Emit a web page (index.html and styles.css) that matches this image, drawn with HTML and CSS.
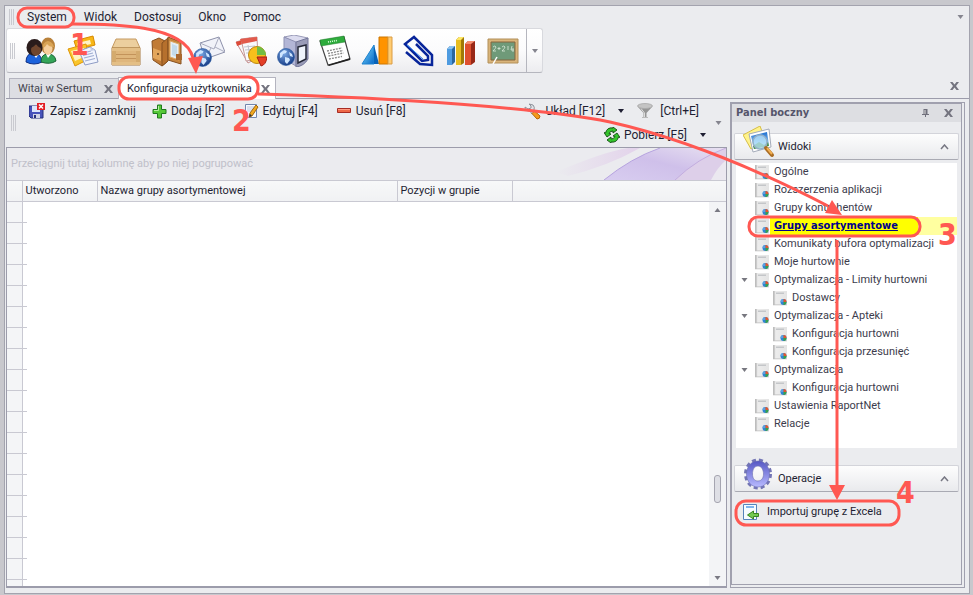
FILE: index.html
```html
<!DOCTYPE html>
<html lang="pl">
<head>
<meta charset="utf-8">
<title>Sertum</title>
<link rel="stylesheet" href="styles.css">
</head>
<body>
<svg class="defs" width="0" height="0" aria-hidden="true">
  <defs>
    <linearGradient id="steel" x1="0" y1="0" x2="1" y2="0"><stop offset="0" stop-color="#c3c3c3"/><stop offset=".2" stop-color="#ececec"/><stop offset="1" stop-color="#e4e4e4"/></linearGradient>
    <linearGradient id="mount" x1="0" y1="0" x2="1" y2="1"><stop offset="0" stop-color="#7fe0ff"/><stop offset="1" stop-color="#0868c8"/></linearGradient>
    <linearGradient id="gear" x1="0" y1="0" x2="0" y2="1"><stop offset="0" stop-color="#5658c4"/><stop offset="1" stop-color="#b8baff"/></linearGradient>
    <linearGradient id="sky" x1="0" y1="0" x2="0" y2="1"><stop offset="0" stop-color="#1d6fd0"/><stop offset="1" stop-color="#c5edff"/></linearGradient>
    <radialGradient id="ball" cx=".4" cy=".3" r=".8"><stop offset="0" stop-color="#7aa8e4"/><stop offset="1" stop-color="#0a2f7c"/></radialGradient>
    <symbol id="doc" viewBox="0 0 16 16">
      <path d="M1 1h14v14H1z" fill="url(#steel)"/><path d="M1 1h1.500v14H1zM1 14.500h14v.8H1z" fill="#bdbdbd"/>
      <path d="M4 2.500h8v1.500H4z" fill="#c4c6c9"/>
      <circle cx="11.500" cy="12" r="3" fill="#2f83d6"/><path d="M8.500 12a3 3 0 0 1 3-3v3z" fill="#5aa0e0"/><path d="M11.500 12V9a3 3 0 0 1 3 3z" fill="#e2582c"/><path d="M11.500 12h3a3 3 0 0 1-3 3z" fill="#3aa04a"/>
    </symbol>
    <symbol id="globe" viewBox="0 0 18 18">
      <circle cx="9" cy="9" r="8.500" fill="url(#ball)" stroke="#24569e" stroke-width=".6"/>
      <path d="M3 5l4-3 3 1-1 2-3 1-1 3-2 1zM8 9l4 1 1 2-3 4-2-2zM12 4l3 2 1 3-3-1z" fill="#cfe6ff"/>
    </symbol>
    <symbol id="close" viewBox="0 0 9 8"><path d="M0 0h2.500L4.500 2.500 6.500 0H9L6 4l3 4H6.500L4.500 5.500 2.500 8H0l3-4z" fill="#74747f"/></symbol>
    <symbol id="down" viewBox="0 0 6 4"><path d="M0 0h6L3 4z" fill="currentColor"/></symbol>
  </defs>
</svg>

<div class="window">
  <nav class="menubar" aria-label="Menu">
    <span class="grip"></span>
    <button>System</button><button>Widok</button><button>Dostosuj</button><button>Okno</button><button>Pomoc</button>
    <svg class="menu-more" width="7" height="4"><use href="#down"/></svg>
  </nav>

  <div class="toolbar">
    <span class="grip"></span>
    <button aria-label="Kontrahenci"><svg width="32" height="32" viewBox="0 0 32 32">
      <path d="M1 27q0-9 8-9 7 0 8 9-8 4-16 0z" fill="#1d63dc" stroke="#0d2f86"/><path d="M8 19l3 4 3-4z" fill="#fff"/>
      <path d="M16 27q0-8 7-8t8 7q-6 4-15 1z" fill="#34a558" stroke="#196233"/><path d="M21 19l2 4 3-4z" fill="#fff"/>
      <ellipse cx="23" cy="11" rx="7" ry="8.500" fill="#b9813a"/><ellipse cx="23" cy="13.500" rx="4.500" ry="6" fill="#f6cf9d"/><path d="M17 13q1-6 6-7 5 1 6 6-5 0-7-3-2 4-5 4z" fill="#d9a456"/>
      <ellipse cx="9.500" cy="12.500" rx="8" ry="8.500" fill="#2a1c1c"/><ellipse cx="11" cy="15" rx="5" ry="5.500" fill="#70462e"/><path d="M5 13q5-1 6-5 1 4 5 5l-1-6-5-2-5 3z" fill="#2a1c1c"/>
    </svg></button>
    <button aria-label="Dokumenty"><svg width="32" height="32" viewBox="0 0 32 32">
      <path d="M7 6L26 1l2 9-18 5z" fill="#f7b717" stroke="#d98a00"/><path d="M10 8l13-3 1 4-13 3z" fill="#fff3c7"/>
      <path d="M1 14L19 9l3 15-14 7z" fill="#f9c52c" stroke="#df9606"/><path d="M4 16l13-3 2 8-11 5z" fill="#fff2c0"/>
      <path d="M12 16l11-4 5 3 3 12-13 3z" fill="#f1f4fd" stroke="#8e9cc5"/><path d="M23 12l1 4 4-1z" fill="#c2cce8"/><path d="M16 18l8-2M16 20.500l10-2.500M17 23l10-2.500M18 26l10-2.500" stroke="#a0aed2" stroke-width="1.200"/>
    </svg></button>
    <button aria-label="Magazyn"><svg width="32" height="32" viewBox="0 0 32 32">
      <path d="M7 4h20l4 9H3z" fill="#eccf9e" stroke="#c59a61"/><path d="M3 13h28v17H3z" fill="#c39257" stroke="#a67840"/>
      <path d="M7 16h20v11H7z" fill="#dfb67c"/><path d="M7 19.500h20M7 23.500h20" stroke="#c3935a"/><path d="M3 13h28v3H3zM3 27h28v3H3z" fill="#e4bf86"/><path d="M3 16h4v11H3zM27 16h4v11h-4z" fill="#d4aa6d"/>
    </svg></button>
    <button aria-label="Katalog"><svg width="32" height="32" viewBox="0 0 32 32">
      <path d="M1 6l7-3 8 4v20l-5 4-9-6z" fill="#c17b36" stroke="#855020"/><path d="M2 13l8 3v10l-8-3z" fill="#e3a65c"/>
      <path d="M11 8l6-5v23l-6 5z" fill="#b6702d" stroke="#855020"/><path d="M17 2l13 5v22l-13-4z" fill="#c7843c" stroke="#855020"/>
      <path d="M19 6l9 3v16l-9-3z" fill="#e5eef4" stroke="#e0aa64"/><path d="M21 9l5 2v11l-5-2z" fill="#c4dbea"/><path d="M25 19h6v6h-6z" fill="#a9682f"/><circle cx="7" cy="19" r="1" fill="#65401f"/>
    </svg></button>
    <button aria-label="Poczta"><svg width="32" height="32" viewBox="0 0 32 32">
      <path d="M7 8L26 2l6 15-20 7z" fill="#f1f2f9" stroke="#8d91aa"/><path d="M7 8l14 6 5-12M12 24l6-11M32 17l-10-5" fill="none" stroke="#a9acbf"/>
      <use href="#globe" x="0" y="13" width="19" height="19"/>
    </svg></button>
    <button aria-label="Raporty"><svg width="32" height="32" viewBox="0 0 32 32">
      <path d="M1 7l14-4 7 20-9 5z" fill="#f8f8fb" stroke="#c58b8b"/><path d="M1 7l14-4 1 3L2 11z" fill="#dd4a38"/>
      <path d="M6 4l16-2 1 22-12 2z" fill="#f9f9fc" stroke="#c49999"/><path d="M5 4l17-2v4L7 9z" fill="#e25a4c"/><path d="M9 12l11-1M10 15l10-1M11 18h6M13 10l2 12" stroke="#c2c4d0"/>
      <circle cx="22" cy="20" r="8.500" fill="#f8bf1c" stroke="#bc8510"/><path d="M22 20v-8.500a9 9 0 0 1 9 8.500z" fill="#72bd42"/><path d="M22 22l10 0q-1 8-6 9z" fill="#e33f27" stroke="#a32014"/>
    </svg></button>
    <button aria-label="Serwer"><svg width="32" height="32" viewBox="0 0 32 32">
      <path d="M7 2l10-2 14 3-3 4-9 1z" fill="#dcdcef" stroke="#9a9bb8"/><path d="M7 2l12 5v24L7 24z" fill="#b3b6d6" stroke="#8f92b3"/><path d="M19 7l12-4v21q-4 7-12 8z" fill="#9a9cb8" stroke="#74779a"/><path d="M21 12l8-2v14l-8 4z" fill="#eef3fb" stroke="#252838" stroke-width="1.500"/>
      <use href="#globe" x="0" y="13" width="18" height="18"/>
    </svg></button>
    <button aria-label="Kalendarz"><svg width="32" height="32" viewBox="0 0 32 32">
      <path d="M1 6l24-4 6 22-22 6z" fill="#fff" stroke="#444" stroke-width="1.200"/><path d="M1 5l24-4 1 6L2 11z" fill="#2eac3c" stroke="#1d7a28" stroke-width=".5"/><path d="M9 30l22-7v2l-21 6z" fill="#222"/>
      <path d="M8 16l15-3M9 18.500l15-3M9.500 21l15-3M10 24l13-2.500" stroke="#888" stroke-width="1.300" stroke-dasharray="2 1"/><path d="M9 7l9-1.500" stroke="#d9ffd9" stroke-width="1.500" stroke-dasharray="1 1"/>
    </svg></button>
    <button aria-label="Analizy"><svg width="32" height="32" viewBox="0 0 32 32">
      <path d="M1 29L13 10v19z" fill="url(#mount)" stroke="#1e83cf"/><path d="M13 10l5 19h-5z" fill="#0863b9"/>
      <path d="M18 2h9v27h-9z" fill="#ff9300" stroke="#cc7600"/><path d="M27 2h4v27h-4z" fill="#ffcc72" stroke="#db9c42"/>
    </svg></button>
    <button aria-label="Załączniki"><svg width="32" height="32" viewBox="0 0 32 32">
      <path d="M3 17L17 29l12 1 0-10L11 2 2 9l17 17 6-1 0-4L13 9" fill="none" stroke="#08259a" stroke-width="2.500"/><path d="M4 10l16 14" stroke="#2f83f0" stroke-width="1"/>
    </svg></button>
    <button aria-label="Statystyki"><svg width="32" height="32" viewBox="0 0 32 32">
      <path d="M2 14l3-3h5v16l-3 3H2z" fill="#2a669f"/><path d="M2 14h5v16H2z" fill="#4e9be0"/><path d="M2 14l3-3h5l-3 3z" fill="#8ac3f2"/>
      <path d="M11 5l3-3h5v26l-3 2h-5z" fill="#a07a08"/><path d="M11 5h5v25h-5z" fill="#e7bd20"/><path d="M11 5l3-3h5l-3 3z" fill="#ffe865"/>
      <path d="M20 9l3-3h7v21l-4 3h-6z" fill="#982817"/><path d="M20 9h6v21h-6z" fill="#df502f"/><path d="M20 9l3-3h7l-4 3z" fill="#f58d70"/>
    </svg></button>
    <button aria-label="Tablica"><svg width="32" height="32" viewBox="0 0 32 32">
      <path d="M1 4h30v24H1z" fill="#d9b47a" stroke="#b28f58"/><path d="M4 7h24v18H4z" fill="#6f9a79" stroke="#86653d"/>
      <path d="M6 12q2-2 3 0 0 1-3 4h3M12 12v3m-1.500-1.500h3M15 12q2-2 3 0 0 1-3 4h3M20 12h2m-2 2h2M25 11l-1 4h3m-1-2v4" fill="none" stroke="#dcebdc" stroke-width=".8"/><path d="M10 22l-4 7" stroke="#fff" stroke-width="1.500"/>
    </svg></button>
    <button class="overflow" aria-label="Więcej"><svg width="6" height="4"><use href="#down"/></svg></button>
  </div>

  <div class="tabs">
    <div class="tab"><a href="#start">Witaj w Sertum</a><button aria-label="Zamknij kartę"><svg width="9" height="8"><use href="#close"/></svg></button></div>
    <div class="tab active"><a href="#config">Konfiguracja użytkownika</a><button aria-label="Zamknij kartę"><svg width="9" height="8"><use href="#close"/></svg></button></div>
    <button class="close-all" aria-label="Zamknij"><svg width="9" height="8"><use href="#close"/></svg></button>
  </div>

  <div class="workspace">
    <main class="main">
      <div class="commands">
        <span class="grip"></span>
        <div class="command-list">
          <button class="save"><svg width="16" height="16" viewBox="0 0 16 16"><path d="M0 3h14v12H2l-2-2z" fill="#4753ba" stroke="#252f7a"/><path d="M3 3h8v6H3z" fill="#dce5fa"/><path d="M4 11h7v4H4z" fill="#d2d5e5"/><path d="M5 12h2v3H5z" fill="#252f7a"/><path d="M8 0h8v7H8z" fill="#e31e24"/><path d="M10 1.500l4 4m0-4l-4 4" stroke="#fff" stroke-width="1.500"/></svg>Zapisz i zamknij</button>
          <button class="add"><svg width="15" height="15" viewBox="0 0 15 15"><path d="M5.500 1h4v4.500H14v4H9.500V14h-4V9.500H1v-4h4.500z" fill="#55c837" stroke="#1f7a1c"/><path d="M6.500 2v4.500H2" fill="none" stroke="#b4ee9e"/></svg>Dodaj [F2]</button>
          <button class="edit"><svg width="16" height="16" viewBox="0 0 16 16"><path d="M2.500 1.500h11v13h-11z" fill="#f7f9ff" stroke="#7186ad"/><path d="M4 4h7M4 6h7M4 8h5" stroke="#bdc8dd"/><path d="M13 2l2 2-6 9-3 1 1-4z" fill="#f2a91e" stroke="#9c6510"/><path d="M6 14l1-3 2 1.500z" fill="#333"/></svg>Edytuj [F4]</button>
          <button class="remove"><svg width="16" height="16" viewBox="0 0 16 16"><path d="M1.500 5.500h13v4h-13z" fill="#ed6747" stroke="#a72b22"/><path d="M2 6.500h12" stroke="#ff9a80"/></svg>Usuń [F8]</button>
          <span class="spring"></span>
          <button class="layout"><svg width="17" height="17" viewBox="0 0 17 17"><path d="M5 1L9 2q2 2 1 5l1 2-3 2-2-3Q1 8 1 4l3 2 3-1V3z" fill="#e2e4e8" stroke="#8b9099"/><path d="M8 10.500l2.500-2.500 5.500 5q0 3-3 3z" fill="#f49a1d" stroke="#b7660a"/></svg>Układ [F12]<svg class="drop" width="6" height="4"><use href="#down"/></svg></button>
          <button class="filter"><svg width="16" height="16" viewBox="0 0 16 16"><path d="M1 4l5.500 6v4h3v-4L15 4Q8 7 1 4z" fill="#969696"/><ellipse cx="8" cy="3" rx="7.500" ry="2.500" fill="#c4c4c4" stroke="#999" stroke-width=".6"/><path d="M4 5.500l3.500 4.500v4" fill="none" stroke="#ddd"/><path d="M5 14.500h6" stroke="#bbb"/></svg>[Ctrl+E]</button>
          <div class="second-row"><button class="fetch"><svg width="16" height="16" viewBox="0 0 16 16"><path d="M9 1Q3 0 1.500 6L0 5.500 3 10l4-3-2-.5Q6 4 9 4v2l4-3-4-3z" fill="#35c52c" stroke="#124d12" stroke-width=".9"/><path d="M7 15q6 1 7.500-5l1.500.5L13 6 9 9l2 .5Q10 12 7 12v-2l-4 3 4 3z" fill="#35c52c" stroke="#124d12" stroke-width=".9"/></svg>Pobierz [F5]<svg class="drop" width="6" height="4"><use href="#down"/></svg></button></div>
        </div>
        <svg class="commands-more" width="7" height="4"><use href="#down"/></svg>
      </div>

      <section class="grid">
        <div class="group-hint"><span>Przeciągnij tutaj kolumnę aby po niej pogrupować</span>
          <svg class="wave" width="240" height="32" viewBox="0 0 240 32" aria-hidden="true">
            <defs><linearGradient id="w1" x1="0" x2="1"><stop offset="0" stop-color="#ebebef"/><stop offset="1" stop-color="#dfc8e9"/></linearGradient><linearGradient id="w2" x1="0" y1="1" x2="1" y2="0"><stop offset="0" stop-color="#d8cdf0"/><stop offset=".5" stop-color="#cfc0ea"/><stop offset="1" stop-color="#e8e1f1"/></linearGradient></defs>
            <path d="M70 24Q120 3 142 0h12Q122 18 82 28z" fill="url(#w1)" opacity=".7"/>
            <path d="M118 32Q145 10 174 0h66v14q-10 10-14 18z" fill="url(#w2)"/><path d="M118 32Q145 10 174 0" fill="none" stroke="#b6a3df"/>
            <path d="M189 32q23-22 51-32v16q-9 7-12 16z" fill="#ddcfe9"/><path d="M189 32q23-22 51-32" fill="none" stroke="#c3addf"/><path d="M225 32q6-12 15-20v20z" fill="#ebe8f0"/>
          </svg>
        </div>
        <table class="columns">
          <colgroup><col class="c-mark"><col class="c-date"><col class="c-name"><col class="c-count"><col></colgroup>
          <thead><tr><th></th><th>Utworzono</th><th>Nazwa grupy asortymentowej</th><th>Pozycji w grupie</th><th></th></tr></thead>
        </table>
        <div class="rows">
          <div class="row-marks"></div>
          <div class="scrollbar"><svg width="7" height="4" viewBox="0 0 6 4"><path d="M0 4h6L3 0z" fill="#797983"/></svg><span class="thumb"></span><svg width="7" height="4" viewBox="0 0 6 4"><path d="M0 0h6L3 4z" fill="#797983"/></svg></div>
        </div>
      </section>
    </main>

    <aside class="side">
      <header class="side-title"><h2>Panel boczny</h2>
        <button aria-label="Przypnij"><svg width="7" height="8" viewBox="0 0 7 8"><path d="M1.500 0h4v5H7v1H4v2H3V6H0V5h1.500z" fill="#6f6f7b"/><path d="M2.500 1h1v4h-1z" fill="#ddd"/></svg></button>
        <button aria-label="Zamknij panel"><svg width="9" height="8"><use href="#close"/></svg></button>
      </header>
      <section>
        <div class="group-head">
          <svg class="big-icon" width="32" height="32" viewBox="0 0 32 32"><path d="M0 9L17 0l6 16-15 7z" fill="#fff38b" stroke="#d5bd49"/><path d="M6 8l20-5 2 18-18 5z" fill="#fff" stroke="#a4abb9"/><path d="M8 10l16-4 2 13-15 4z" fill="url(#sky)"/><path d="M10 20l6-4 5 3 4-3 1 4-15 3z" fill="#478d41"/><circle cx="17" cy="16" r="7" fill="#bce5fb" fill-opacity=".75" stroke="#93b0c9" stroke-width="1.500"/><path d="M23 22l6 7" stroke="#aa6c24" stroke-width="4" stroke-linecap="round"/><path d="M24 22l5 6" stroke="#f2b053" stroke-width="2"/></svg>
          <h3>Widoki</h3><button aria-label="Zwiń"><svg width="9" height="6" viewBox="0 0 9 6"><path d="M1 5l3.500-4L8 5" fill="none" stroke="#777783" stroke-width="1.500"/></svg></button>
        </div>
        <ul class="tree">
          <li><i></i><svg width="16" height="16"><use href="#doc"/></svg><a href="#v">Ogólne</a></li>
          <li><i></i><svg width="16" height="16"><use href="#doc"/></svg><a href="#v">Rozszerzenia aplikacji</a></li>
          <li><i></i><svg width="16" height="16"><use href="#doc"/></svg><a href="#v">Grupy kontrahentów</a></li>
          <li class="selected"><i></i><svg width="16" height="16"><use href="#doc"/></svg><a href="#v">Grupy asortymentowe</a></li>
          <li><i></i><svg width="16" height="16"><use href="#doc"/></svg><a href="#v">Komunikaty bufora optymalizacji</a></li>
          <li><i></i><svg width="16" height="16"><use href="#doc"/></svg><a href="#v">Moje hurtownie</a></li>
          <li><i><svg width="7" height="4"><use href="#down"/></svg></i><svg width="16" height="16"><use href="#doc"/></svg><a href="#v">Optymalizacja - Limity hurtowni</a></li>
          <li class="child"><i></i><svg width="16" height="16"><use href="#doc"/></svg><a href="#v">Dostawcy</a></li>
          <li><i><svg width="7" height="4"><use href="#down"/></svg></i><svg width="16" height="16"><use href="#doc"/></svg><a href="#v">Optymalizacja - Apteki</a></li>
          <li class="child"><i></i><svg width="16" height="16"><use href="#doc"/></svg><a href="#v">Konfiguracja hurtowni</a></li>
          <li class="child"><i></i><svg width="16" height="16"><use href="#doc"/></svg><a href="#v">Konfiguracja przesunięć</a></li>
          <li><i><svg width="7" height="4"><use href="#down"/></svg></i><svg width="16" height="16"><use href="#doc"/></svg><a href="#v">Optymalizacja</a></li>
          <li class="child"><i></i><svg width="16" height="16"><use href="#doc"/></svg><a href="#v">Konfiguracja hurtowni</a></li>
          <li><i></i><svg width="16" height="16"><use href="#doc"/></svg><a href="#v">Ustawienia RaportNet</a></li>
          <li><i></i><svg width="16" height="16"><use href="#doc"/></svg><a href="#v">Relacje</a></li>
        </ul>
      </section>
      <section>
        <div class="group-head">
          <svg class="big-icon" width="32" height="32" viewBox="0 0 32 32"><ellipse cx="15" cy="16" rx="12.500" ry="14" fill="none" stroke="#7375b5" stroke-width="3" stroke-dasharray="4 3"/><path fill-rule="evenodd" d="M15 3c7 0 11.500 6 11.500 13S22 29 15 29 3.500 23 3.500 16 8 3 15 3zm0 5c-3.500 0-5.500 3.500-5.500 8s2 7 5.500 7 5.500-3 5.500-7-2-8-5.500-8z" fill="url(#gear)" stroke="#6c6eb0" stroke-width=".6"/></svg>
          <h3>Operacje</h3><button aria-label="Zwiń"><svg width="9" height="6" viewBox="0 0 9 6"><path d="M1 5l3.500-4L8 5" fill="none" stroke="#777783" stroke-width="1.500"/></svg></button>
        </div>
        <button class="import"><svg width="16" height="16" viewBox="0 0 16 16"><path d="M.500.500h13v15H.500z" fill="#f6fbff" stroke="#5683bb"/><path d="M3 3h8" stroke="#7eb4ed" stroke-width="2"/><path d="M15.500 9.500v3h-5V15l-6-4 6-4v2.500z" fill="#73c951" stroke="#388322"/></svg>Importuj grupę z Excela</button>
      </section>
    </aside>
  </div>
</div>

<svg class="annotations" width="973" height="595" viewBox="0 0 973 595">
  <g fill="none" stroke="#ff5852" stroke-width="3">
    <rect x="18" y="8" width="56" height="19" rx="9"/>
    <rect x="119" y="77" width="139" height="22" rx="10"/>
    <rect x="749" y="217" width="171" height="19" rx="9"/>
    <rect x="736" y="501" width="163" height="24" rx="10"/>
    <path d="M72 24C110 24 185 24 193 58"/>
    <path d="M258 94C400 98 540 108 610 122C690 140 770 176 828 206"/>
    <path d="M837 240V486"/>
  </g>
  <path d="M188 58l15-2-7 18zM832 200l-7 13 17 2zM829 485h16l-8 15z" fill="#ff5852"/>
  <g class="steps"><text x="70" y="55">1</text><text x="232" y="131">2</text><text x="938" y="245">3</text><text x="896" y="503">4</text></g>
</svg>
</body>
</html>
```
FILE: styles.css
```css
* { box-sizing: border-box; }
body {
  margin: 0;
  padding: 5px 3px 1px 4px;
  height: 100vh;
  background: #c8c8cd;
  font: 12px/16px Roboto, sans-serif;
  color: #1e1e32;
  overflow: hidden;
}
button {
  display: flex;
  align-items: center;
  padding: 0;
  border: 0;
  background: none;
  font: inherit;
  color: inherit;
}
a { color: inherit; text-decoration: none; }
svg { flex: none; display: block; }
.defs { position: absolute; }
h2, h3, ul { margin: 0; padding: 0; }

.window {
  display: flex;
  flex-direction: column;
  height: 100%;
  border: 1px solid #a3a3ae;
  background: #ebecef;
  padding: 0 0 5px 1px;
}
.grip {
  flex: none;
  width: 5px;
  height: 16px;
  background: repeating-linear-gradient(90deg, #c9cad0 0 1px, transparent 1px 2px);
}
.menubar {
  display: flex;
  align-items: center;
  height: 22px;
  gap: 17px;
  padding: 0 5px 0 3px;
}
.menubar .grip { margin-right: -4px; }
.menu-more { margin-left: auto; color: #85858f; }

.toolbar {
  display: flex;
  align-self: flex-start;
  align-items: center;
  height: 45px;
  gap: 10px;
  padding-left: 3px;
  border: 1px solid #d8d9de;
  border-bottom-color: #b5b6be;
  border-radius: 3px;
  background: linear-gradient(#fff, #fbfbfc 50%, #ececef);
}
.toolbar .overflow {
  align-self: stretch;
  justify-content: center;
  width: 16px;
  margin-left: -3px;
  border-left: 1px solid #b5b6be;
  color: #85858f;
}

.tabs {
  display: flex;
  align-items: flex-end;
  height: 25px;
  margin-top: 1px;
  padding: 0 10px 0 3px;
  border-bottom: 1px solid #9c9cab;
  font-size: 11px;
}
.tab {
  display: flex;
  align-items: center;
  gap: 12px;
  height: 20px;
  padding: 0 5px 0 8px;
  border: 1px solid #b4b4bf;
  border-bottom: 0;
  background: #dddee3;
  color: #44444f;
}
.tab.active {
  gap: 9px;
  height: 22px;
  margin: 0 0 -1px -1px;
  background: #fff;
  color: #1e1e32;
}
.close-all { margin: 0 0 8px auto; }

.workspace {
  display: flex;
  flex: 1;
  min-height: 0;
  gap: 3px;
  padding-right: 4px;
}
.main {
  display: flex;
  flex: 1;
  min-width: 0;
  flex-direction: column;
}
.commands {
  display: flex;
  align-items: center;
  height: 48px;
  padding: 0 5px 0 5px;
}
.command-list {
  display: flex;
  flex: 1;
  flex-wrap: wrap;
  align-self: stretch;
  align-content: flex-start;
  padding: 0 9px 0 13px;
}
.command-list button { height: 24px; gap: 4px; }
.command-list .save { gap: 5px; }
.command-list .add { margin-left: 16px; }
.command-list .edit, .command-list .remove { margin-left: 18px; }
.command-list .filter { gap: 7px; margin: 0 7px 0 13px; }
.command-list .drop { margin-left: 9px; }
.spring { flex: 1; }
.second-row { display: flex; flex-basis: 100%; justify-content: flex-end; }
.commands-more { color: #85858f; }

.grid {
  display: flex;
  flex: 1;
  flex-direction: column;
  border: solid #9c9cab;
  border-width: 1px 1px 2px 1px;
  background: #fff;
  font-size: 11px;
}
.group-hint {
  display: flex;
  align-items: center;
  height: 32px;
  padding-left: 4px;
  background: #ebebef;
  color: #c0c0ca;
}
.wave { margin-left: auto; }
.columns {
  width: 100%;
  table-layout: fixed;
  border-collapse: collapse;
  background: linear-gradient(#f7f8f9, #f0f1f3);
}
.columns tr { height: 21px; }
.columns th {
  padding: 0 3px;
  border: solid #c9c9d2;
  border-width: 1px 1px 1px 0;
  text-align: left;
  font-weight: 400;
}
.columns th:last-child { border-right: 0; }
.c-mark { width: 15px; }
.c-date { width: 75px; }
.c-name { width: 300px; }
.c-count { width: 115px; }
.rows { display: flex; flex: 1; justify-content: space-between; }
.row-marks {
  width: 20px;
  background:
    repeating-linear-gradient(transparent 0 20px, #c9c9d2 20px 21px),
    linear-gradient(90deg, #f4f5f7 0 15px, #c9c9d2 15px 16px, #fff 16px);
}
.scrollbar {
  display: flex;
  flex-direction: column;
  align-items: center;
  width: 17px;
  padding: 6px 0;
  background: #f3f4f6;
}
.thumb {
  width: 7px;
  height: 28px;
  margin: 263px 0 auto;
  border: 1px solid #a5a5b0;
  border-radius: 3px;
  background: #dedfe5;
}

.side {
  width: 235px;
  margin: 3px 0 0;
  padding: 0 4px;
  border: 4px double #a0a0ae;
  border-width: 2px 4px 4px 2px;
  border-top-style: solid;
  border-left-style: solid;
  font-size: 11px;
}
.side-title {
  display: flex;
  align-items: center;
  gap: 15px;
  height: 18px;
  margin: 0 -4px 11px;
  padding: 0 8px 0 4px;
  background: #dddee2;
}
.side-title h2 {
  flex: 1;
  font: bold 11px/16px "DejaVu Sans Condensed", sans-serif;
  color: #55556b;
}
.group-head {
  display: flex;
  align-items: center;
  height: 27px;
  margin: 0 -2px;
  padding: 0 9px 0 8px;
  border: 1px solid #d3d4da;
  border-bottom-color: #a9aab3;
  border-radius: 2px;
  background: linear-gradient(#fdfdfd, #e9eaed);
}
.big-icon { margin-top: -10px; }
.group-head h3 { flex: 1; padding-left: 3px; font-size: 11px; font-weight: 400; }
.tree {
  margin: 3px 0 17px;
  height: 285px;
  background: #fff;
  list-style: none;
  color: #3c3c4c;
}
.tree li { display: flex; align-items: center; height: 18px; }
.tree li.child { padding-left: 18px; }
.tree i { width: 18px; padding-left: 5px; color: #77777f; }
.tree a { padding-left: 4px; }
.tree .selected a {
  flex: 1;
  background: linear-gradient(90deg, #ff0 148px, #ffffa0 148px);
  font: bold 11px/18px "DejaVu Sans Condensed", sans-serif;
  color: #00008b;
  text-decoration: underline;
}
.import { gap: 8px; margin: 12px 0 0 7px; }

.annotations { position: absolute; top: 0; left: 0; pointer-events: none; }
.steps { fill: #ff5852; font: bold 30px "DejaVu Sans Condensed", sans-serif; }
```
